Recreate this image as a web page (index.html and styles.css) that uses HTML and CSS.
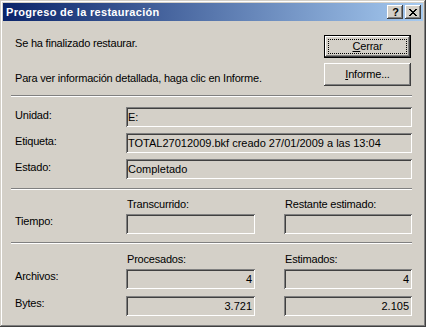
FILE: index.html
```html
<!DOCTYPE html>
<html lang="es">
<head>
<meta charset="utf-8">
<title>Progreso de la restauración</title>
<link rel="stylesheet" href="styles.css">
</head>
<body>
<div class="window">
  <div class="titlebar">
    <span class="title">Progreso de la restauración</span>
    <div class="caption-btns">
      <span class="cbtn help">?</span>
      <span class="cbtn close">
        <svg width="8" height="7" viewBox="0 0 8 7"><path d="M0 0h2v1h1v1h2v-1h1v-1h2v1h-1v1h-1v1h-1v1h1v1h1v1h1v1h-2v-1h-1v-1h-2v1h-1v1h-2v-1h1v-1h1v-1h1v-1h-1v-1h-1v-1h-1z" fill="#000"/></svg>
      </span>
    </div>
  </div>
  <div class="client">
    <div class="top">
      <div class="messages">
        <p class="msg msg1">Se ha finalizado restaurar.</p>
        <p class="msg msg2">Para ver información detallada, haga clic en Informe.</p>
      </div>
      <div class="buttons">
        <button class="btn default"><span class="focus"><u>C</u>errar</span></button>
        <button class="btn"><span class="cap"><u>I</u>nforme...</span></button>
      </div>
    </div>
    <div class="sep sep1"></div>
    <div class="info">
      <div class="label">Unidad:</div><div class="field">E:</div>
      <div class="label">Etiqueta:</div><div class="field">TOTAL27012009.bkf creado 27/01/2009 a las 13:04</div>
      <div class="label">Estado:</div><div class="field">Completado</div>
    </div>
    <div class="sep sep2"></div>
    <div class="stats time">
      <div class="spacer"></div><div class="head">Transcurrido:</div><div class="head col3">Restante estimado:</div>
      <div class="label">Tiempo:</div><div class="field"></div><div class="field col3"></div>
    </div>
    <div class="sep sep3"></div>
    <div class="stats count">
      <div class="spacer"></div><div class="head">Procesados:</div><div class="head col3">Estimados:</div>
      <div class="label">Archivos:</div><div class="field num">4</div><div class="field num col3">4</div>
      <div class="label r2">Bytes:</div><div class="field num r2">3.721</div><div class="field num col3 r2">2.105</div>
    </div>
  </div>
</div>
</body>
</html>
```
FILE: styles.css
```css
* { box-sizing: border-box; }
html, body { margin: 0; padding: 0; background: #D4D0C8; }
body {
  font-family: "Liberation Sans", Arial, sans-serif;
  font-size: 11px;
  letter-spacing: -0.2px;
  color: #000;
}
.window {
  width: 426px;
  height: 327px;
  padding: 3px;
  background: #D4D0C8;
  box-shadow: inset -1px -1px #404040, inset 1px 1px #D4D0C8, inset -2px -2px #808080, inset 2px 2px #FFFFFF;
  display: flex;
  flex-direction: column;
}
.titlebar {
  height: 18px;
  flex: none;
  display: flex;
  align-items: center;
  justify-content: space-between;
  padding-left: 3px;
  padding-right: 2px;
  background: linear-gradient(to right, #0A246A, #A6CAF0);
}
.title {
  color: #fff;
  font-weight: bold;
  font-size: 11px;
  letter-spacing: 0.3px;
  line-height: 18px;
  white-space: nowrap;
}
.caption-btns { display: flex; gap: 2px; }
.cbtn {
  width: 16px;
  height: 14px;
  background: #D4D0C8;
  box-shadow: inset -1px -1px #404040, inset 1px 1px #FFFFFF, inset -2px -2px #808080;
  display: flex;
  align-items: center;
  justify-content: center;
}
.help {
  font-weight: bold;
  font-size: 11px;
  letter-spacing: 0;
  line-height: 14px;
  padding-left: 1px;
}
.close svg { display: block; }
.client {
  flex: 1;
  padding: 0 11px 0 8px;
  display: flex;
  flex-direction: column;
}
.top {
  height: 74px;
  display: flex;
  justify-content: space-between;
}
.messages { padding-left: 4px; padding-top: 16px; }
.msg { margin: 0; line-height: 13px; white-space: nowrap; }
.msg2 { margin-top: 22px; }
.buttons {
  width: 87px;
  margin-right: 1px;
  padding-top: 14px;
  display: flex;
  flex-direction: column;
  gap: 5px;
}
.btn {
  height: 23px;
  width: 87px;
  margin: 0;
  padding: 0;
  border: none;
  background: #D4D0C8;
  font: inherit;
  letter-spacing: inherit;
  color: #000;
  display: flex;
  align-items: stretch;
  box-shadow: inset -1px -1px #404040, inset 1px 1px #FFFFFF, inset -2px -2px #808080;
}
.btn.default {
  box-shadow: inset 0 0 0 1px #000, inset -2px -2px #404040, inset 2px 2px #FFFFFF, inset -3px -3px #808080;
}
.btn .cap {
  flex: 1;
  display: flex;
  align-items: center;
  justify-content: center;
  line-height: 13px;
  padding-bottom: 1px;
}
.btn .focus {
  flex: 1;
  margin: 4px;
  border: 1px dotted #000;
  display: flex;
  align-items: center;
  justify-content: center;
  line-height: 13px;
}
u { text-decoration: underline; text-underline-offset: 1px; }
.sep {
  height: 2px;
  flex: none;
  border-top: 1px solid #808080;
  border-bottom: 1px solid #FFFFFF;
}
.info {
  margin-top: 10px;
  display: grid;
  grid-template-columns: 115px 286px;
  grid-auto-rows: 20px;
  row-gap: 6px;
}
.label {
  padding-left: 4px;
  line-height: 13px;
  align-self: center;
  margin-bottom: 3px;
  white-space: nowrap;
}
.field {
  height: 20px;
  line-height: 20px;
  padding: 0 3px 0 2px;
  letter-spacing: 0;
  white-space: nowrap;
  overflow: hidden;
  box-shadow: inset 1px 1px #808080, inset -1px -1px #FFFFFF, inset 2px 2px #404040, inset -2px -2px #D4D0C8;
}
.num { text-align: right; }
.sep2 { margin-top: 9px; }
.sep3 { margin-top: 8px; }
.stats {
  display: grid;
  grid-template-columns: 115px 129px 157px;
}
.time { margin-top: 8px; }
.count { margin-top: 9px; }
.head {
  line-height: 13px;
  padding-left: 1px;
  padding-bottom: 3px;
  white-space: nowrap;
}
.col3 { justify-self: end; width: 128px; }
.stats .label { margin-bottom: 5px; }
.r2 { margin-top: 7px; }
.stats .label.r2 { margin-top: 7px; }
```
